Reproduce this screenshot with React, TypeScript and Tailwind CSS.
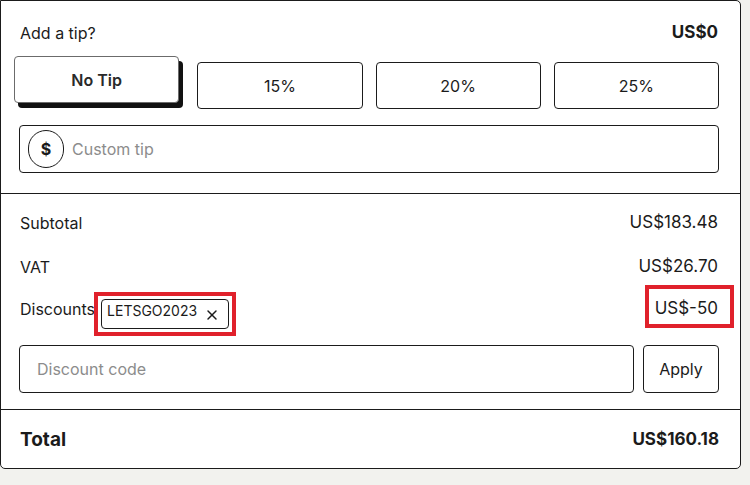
import { X } from "lucide-react";

const tipOptions = [
  { label: "No Tip", selected: true },
  { label: "15%", selected: false },
  { label: "20%", selected: false },
  { label: "25%", selected: false },
];

const summaryRows = [
  { label: "Subtotal", value: "US$183.48" },
  { label: "VAT", value: "US$26.70" },
];

export default function App() {
  return (
    <div
      className="min-h-[485px] w-[750px] bg-[#f2f2ee] text-[#1b1b1b]"
      style={{ fontFamily: "Inter, 'Noto Sans', sans-serif" }}
    >
      <div className="h-[469px] w-[741px] rounded-br-[5px] rounded-bl-[5px] rounded-tr-[5px] border border-[#1b1b1b] bg-white">
        {/* Tip */}
        <div className="pt-[21px] pr-[21px] pb-[20px] pl-[18px]">
          <div className="flex h-[22px] items-center justify-between px-px">
            <span className="text-[16px]">Add a tip?</span>
            <span className="text-[17px] font-bold">US$0</span>
          </div>
          <div className="mt-[18px] grid grid-cols-4 gap-[13px]">
            {tipOptions.map((tip) =>
              tip.selected ? (
                <button
                  key={tip.label}
                  className="h-[47px] -translate-x-[5px] -translate-y-[6px] rounded-[4px] border border-[#6b6b6b] bg-white text-[16px] font-semibold text-[#2a2a2a] shadow-[4px_5px_0_#111]"
                >
                  {tip.label}
                </button>
              ) : (
                <button
                  key={tip.label}
                  className="h-[47px] rounded-[4px] border border-[#1b1b1b] bg-white text-[16px]"
                >
                  {tip.label}
                </button>
              )
            )}
          </div>
          <div className="mt-[16px] flex h-[48px] items-center gap-[8px] rounded-[4px] border border-[#1b1b1b] px-[8px]">
            <span className="flex h-[38px] w-[36px] items-center justify-center rounded-full border border-[#1b1b1b] text-[16px] font-bold">
              $
            </span>
            <span className="text-[16px] text-[#8c8c8c]">Custom tip</span>
          </div>
        </div>

        {/* Summary */}
        <div className="border-t border-[#1b1b1b] pt-[18px] pr-[21px] pb-[16px] pl-[18px]">
          <div className="flex flex-col gap-[22px] px-px">
            {summaryRows.map((row) => (
              <div key={row.label} className="flex h-[22px] items-center justify-between">
                <span className="text-[16px]">{row.label}</span>
                <span className="text-[17px]">{row.value}</span>
              </div>
            ))}
          </div>
          <div className="mt-[19px] flex items-start justify-between px-px">
            <div className="flex items-start">
              <span className="mt-px text-[16px] leading-[22px]">Discounts</span>
              <span className="relative mt-[2px] ml-[6px] flex h-[30px] w-[128px] items-center justify-between rounded-[4px] border border-[#1b1b1b] pr-[8px] pl-[5px]">
                <span className="-mt-[8px] text-[14px]">LETSGO2023</span>
                <X size={16} strokeWidth={2.2} className="mt-[2px]" />
                <span className="pointer-events-none absolute -inset-[8px] border-4 border-[#e0212b]" />
              </span>
            </div>
            <span className="relative text-[17px] leading-[22px]">
              US$-50
              <span className="pointer-events-none absolute -top-[12px] -right-[16px] -bottom-[9px] -left-[10px] border-4 border-[#e0212b]" />
            </span>
          </div>
          <div className="mt-[16px] flex gap-[9px]">
            <div className="flex h-[48px] flex-1 items-center rounded-[4px] border border-[#1b1b1b] px-[17px] text-[16px] text-[#8c8c8c]">
              Discount code
            </div>
            <button className="h-[48px] w-[76px] rounded-[4px] border border-[#1b1b1b] bg-white text-[16px]">
              Apply
            </button>
          </div>
        </div>

        {/* Total */}
        <div className="flex items-center justify-between border-t border-[#1b1b1b] pt-[17px] pr-[21px] pb-[18px] pl-[19px]">
          <span className="text-[19px] leading-[24px] font-bold">Total</span>
          <span className="text-[17px] font-bold">US$160.18</span>
        </div>
      </div>
    </div>
  );
}
